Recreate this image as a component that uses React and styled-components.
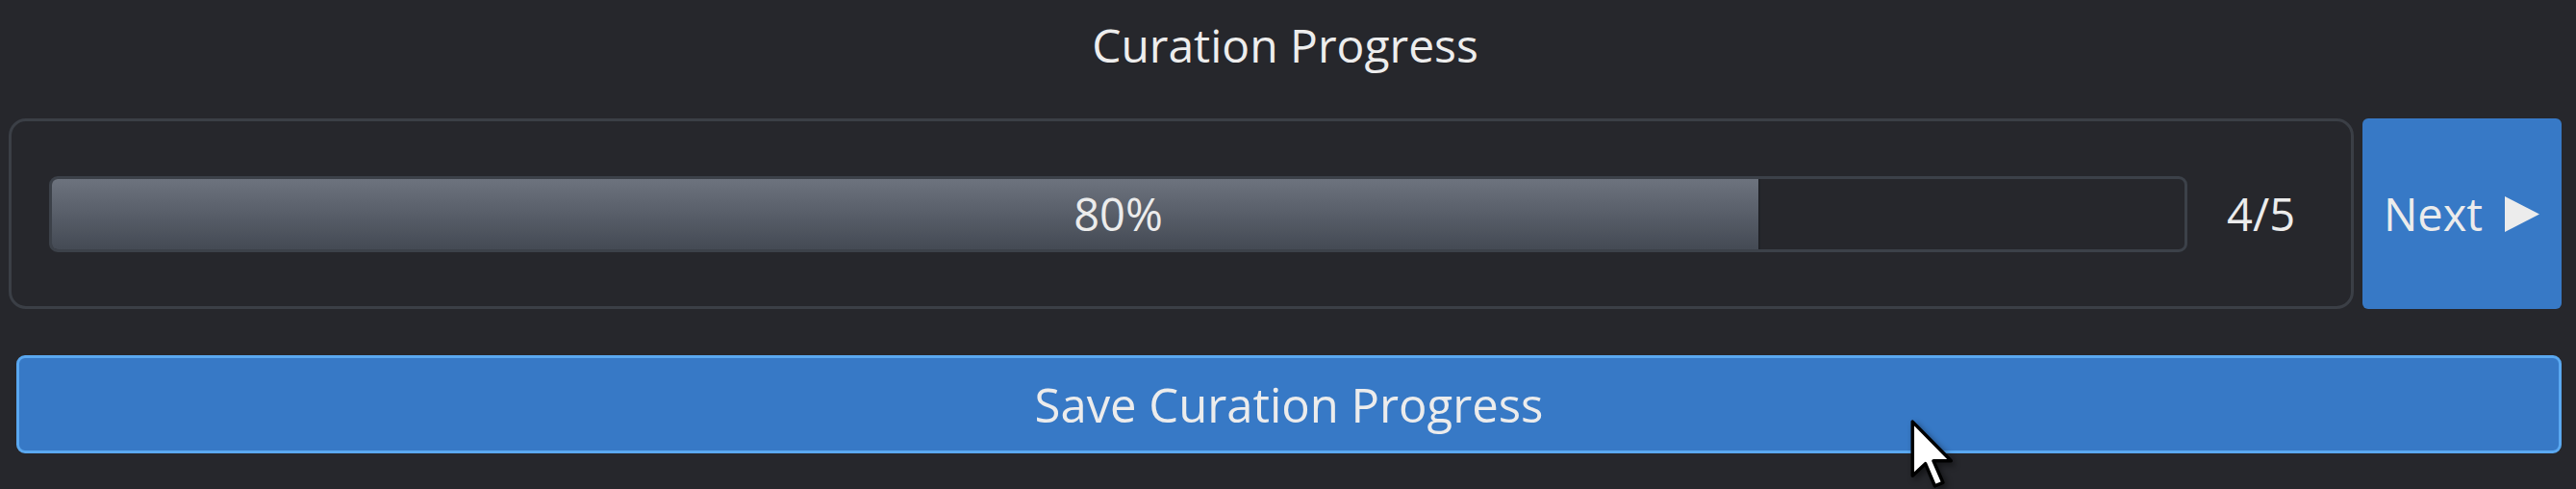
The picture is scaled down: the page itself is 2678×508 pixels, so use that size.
import React from "react";
import styled, {createGlobalStyle} from "styled-components";

const GlobalStyle = createGlobalStyle`
  html, body {
    margin: 0;
    padding: 0;
    background-color: #26272c;
  }
  body {
    font-family: "Open Sans", "Noto Sans", sans-serif;
    color: #ececec;
  }
`;

function ProgressBar({value, total}) {
    const percent = Math.round((value / total) * 100);
    return (
        <Track>
            <Fill style={{width: `${percent}%`}}/>
            <BarLabel>{percent}%</BarLabel>
        </Track>
    );
}

function Cursor() {
    return (
        <CursorWrapper>
            <svg width="46" height="72" viewBox="0 0 13 20.5">
                <path d="M0.6 0.6 L0.6 16.6 L4.4 13 L7.2 19.6 L9.6 18.6 L6.8 12.2 L12 12.2 Z"
                      fill="#ffffff" stroke="#000000" strokeWidth="1" strokeLinejoin="round"/>
            </svg>
        </CursorWrapper>
    );
}

export default function App() {
    const current = 4;
    const total = 5;

    return (
        <Page>
            <GlobalStyle/>
            <Title>Curation Progress</Title>
            <TopRow>
                <Card>
                    <ProgressBar value={current} total={total}/>
                    <Counter>{current}/{total}</Counter>
                </Card>
                <NextButton>
                    Next
                    <svg width="38" height="37" viewBox="0 0 38 37">
                        <path d="M1 0 L37 18.5 L1 37 Z" fill="#ececec"/>
                    </svg>
                </NextButton>
            </TopRow>
            <SaveButton>Save Curation Progress</SaveButton>
            <Cursor/>
        </Page>
    );
}

const Page = styled.div`
  position: relative;
  display: flex;
  flex-direction: column;
  height: 508px;
  padding: 0 15px 0 9px;
  box-sizing: border-box;
  overflow: hidden;
`;

const Title = styled.div`
  height: 94px;
  line-height: 94px;
  text-align: center;
  font-size: 48px;
  color: #ededed;
  margin-bottom: 29px;
`;

const TopRow = styled.div`
  display: flex;
  align-items: stretch;
  gap: 9px;
  height: 198px;
`;

const Card = styled.div`
  flex: 1;
  display: flex;
  align-items: center;
  gap: 41px;
  padding: 0 58px 0 39px;
  border: 3px solid #3b3f46;
  border-radius: 18px;
  box-sizing: border-box;
`;

const Track = styled.div`
  flex: 1;
  display: grid;
  height: 79px;
  border: 3px solid #3c4149;
  border-radius: 9px;
  box-sizing: border-box;
  overflow: hidden;
  > * {
    grid-area: 1 / 1;
  }
`;

const Fill = styled.div`
  height: 100%;
  background: linear-gradient(to bottom, #6d737e 0%, #5a606b 45%, #444a54 100%);
  border-right: 2px solid #202227;
`;

const BarLabel = styled.span`
  align-self: center;
  justify-self: center;
  font-size: 47px;
  line-height: 1;
  color: #ececec;
`;

const Counter = styled.span`
  font-size: 47px;
  color: #ececec;
`;

const NextButton = styled.button`
  width: 207px;
  display: flex;
  align-items: center;
  justify-content: center;
  gap: 22px;
  padding: 0;
  border: none;
  border-radius: 6px;
  background-color: #3779c6;
  color: #ececec;
  font-family: inherit;
  font-size: 47px;
  cursor: pointer;
`;

const SaveButton = styled.button`
  margin: 48px 0 0 8px;
  height: 102px;
  border: 3px solid #5aa8f0;
  border-radius: 9px;
  background-color: #3779c6;
  color: #ececec;
  font-family: inherit;
  font-size: 49px;
  cursor: pointer;
`;

const CursorWrapper = styled.div`
  position: absolute;
  left: 1986px;
  top: 436px;
  line-height: 0;
  pointer-events: none;
  filter: drop-shadow(3px 3px 3px rgba(0, 0, 0, 0.45));
`;
